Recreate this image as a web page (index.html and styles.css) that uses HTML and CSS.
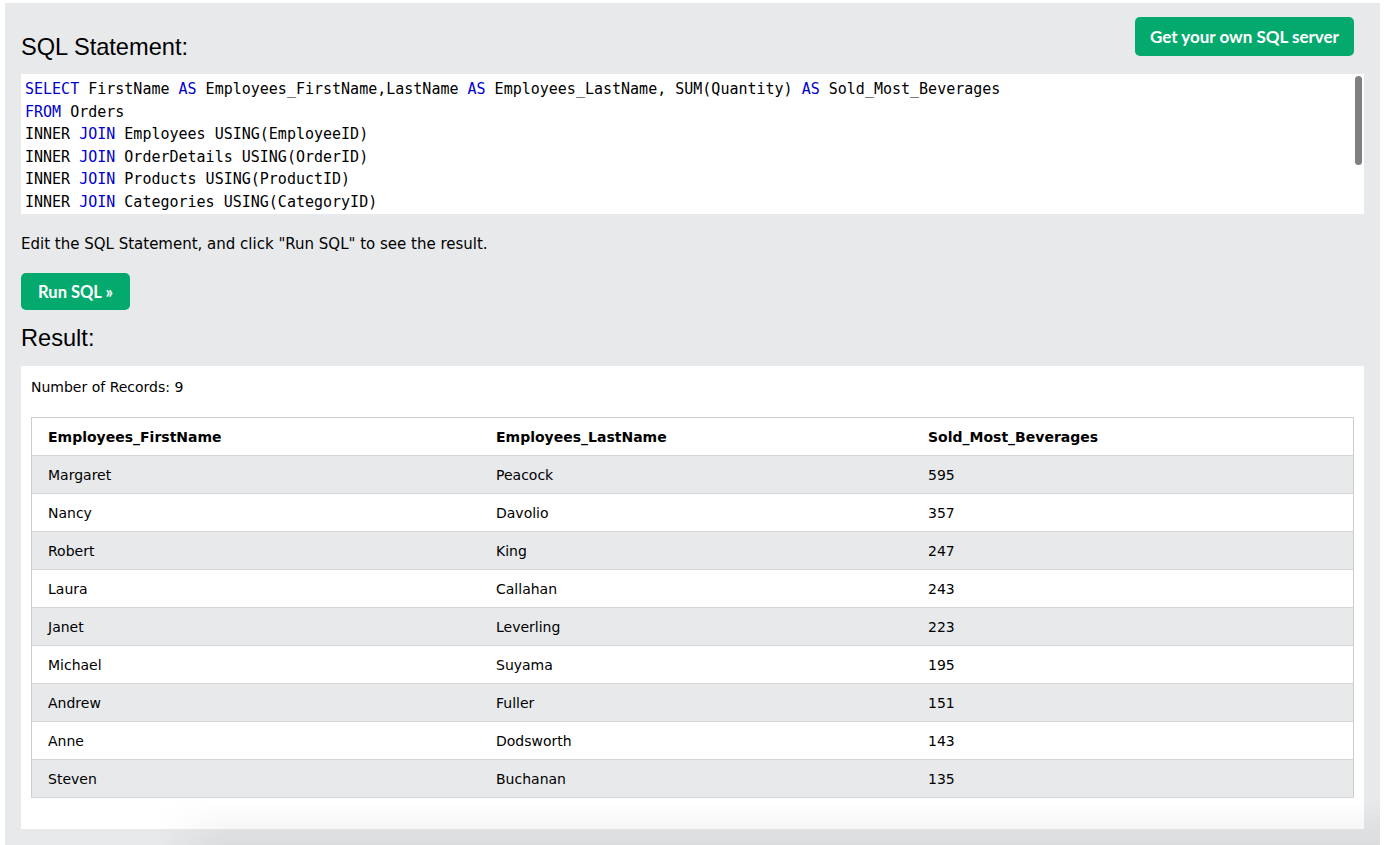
FILE: index.html
```html
<!DOCTYPE html>
<html>
<head>
<meta charset="utf-8">
<title>SQL Tryit</title>
<link rel="stylesheet" href="styles.css">
</head>
<body>
<div class="panel">
  <div class="head-row">
    <h2 class="title title-top">SQL Statement:</h2>
    <a class="btn btn-server">Get your own SQL server</a>
  </div>
  <div class="code">
    <div class="line"><span class="kw">SELECT</span> FirstName <span class="kw">AS</span> Employees_FirstName,LastName <span class="kw">AS</span> Employees_LastName, SUM(Quantity) <span class="kw">AS</span> Sold_Most_Beverages</div>
    <div class="line"><span class="kw">FROM</span> Orders</div>
    <div class="line">INNER <span class="kw">JOIN</span> Employees USING(EmployeeID)</div>
    <div class="line">INNER <span class="kw">JOIN</span> OrderDetails USING(OrderID)</div>
    <div class="line">INNER <span class="kw">JOIN</span> Products USING(ProductID)</div>
    <div class="line">INNER <span class="kw">JOIN</span> Categories USING(CategoryID)</div>
    <div class="scroll-thumb"></div>
  </div>
  <p class="hint">Edit the SQL Statement, and click "Run SQL" to see the result.</p>
  <a class="btn btn-run">Run SQL »</a>
  <h2 class="title title-result">Result:</h2>
  <div class="result">
    <div class="count">Number of Records: 9</div>
    <table class="grid">
      <thead>
        <tr><th class="c1">Employees_FirstName</th><th class="c2">Employees_LastName</th><th class="c3">Sold_Most_Beverages</th></tr>
      </thead>
      <tbody>
        <tr><td>Margaret</td><td>Peacock</td><td>595</td></tr>
        <tr><td>Nancy</td><td>Davolio</td><td>357</td></tr>
        <tr><td>Robert</td><td>King</td><td>247</td></tr>
        <tr><td>Laura</td><td>Callahan</td><td>243</td></tr>
        <tr><td>Janet</td><td>Leverling</td><td>223</td></tr>
        <tr><td>Michael</td><td>Suyama</td><td>195</td></tr>
        <tr><td>Andrew</td><td>Fuller</td><td>151</td></tr>
        <tr><td>Anne</td><td>Dodsworth</td><td>143</td></tr>
        <tr><td>Steven</td><td>Buchanan</td><td>135</td></tr>
      </tbody>
    </table>
  </div>
  <div class="bottom-shade"></div>
</div>
</body>
</html>
```
FILE: styles.css
```css
html, body {
  margin: 0;
  padding: 0;
  background: #ffffff;
  overflow: hidden;
}
body {
  font-family: "DejaVu Sans", Verdana, sans-serif;
  color: #000;
}
.panel {
  position: relative;
  margin: 3px 5px 0 5px;
  background: #e7e9eb;
  padding: 14px 16px 17px 16px;
}
.head-row {
  display: flex;
  justify-content: space-between;
  align-items: flex-start;
}
.title {
  font-family: "Liberation Sans", Arial, sans-serif;
  font-weight: normal;
  font-size: 23.6px;
  line-height: 28px;
  margin: 0;
  color: #000;
}
.title-top {
  margin-top: 16px;
}
.btn {
  display: inline-flex;
  align-items: center;
  justify-content: center;
  background: #04aa6d;
  color: #fff;
  font-family: Lato, "Open Sans", sans-serif;
  font-weight: 700;
  border-radius: 5px;
  text-decoration: none;
  box-sizing: border-box;
}
.btn-server {
  width: 219px;
  height: 39px;
  font-size: 17px;
  margin-right: 10px;
}
.btn-run {
  width: 109px;
  height: 37px;
  font-size: 16.5px;
  margin-top: 18px;
}
.code {
  position: relative;
  margin-top: 13px;
  height: 140px;
  box-sizing: border-box;
  background: #fff;
  padding: 4px 4px;
  overflow: hidden;
  font-family: "DejaVu Sans Mono", Menlo, monospace;
  font-size: 15px;
  line-height: 22.5px;
  color: #000;
}
.line {
  white-space: pre;
}
.kw {
  color: #0000cd;
}
.scroll-thumb {
  position: absolute;
  top: 2px;
  right: 2px;
  width: 7px;
  height: 89px;
  border-radius: 4px;
  background: #808080;
}
.hint {
  margin: 19px 0 0 0;
  font-size: 15px;
  line-height: 22px;
}
.title-result {
  margin-top: 14px;
}
.result {
  margin-top: 14px;
  background: #fff;
  padding: 10px 10px 31px 10px;
}
.count {
  font-size: 14px;
  line-height: 22px;
  margin-bottom: 19px;
}
.grid {
  width: 100%;
  border-collapse: collapse;
  table-layout: fixed;
  border: 1px solid #cccccc;
  font-size: 14px;
}
.grid th,
.grid td {
  text-align: left;
  padding: 9px 16px 7px 16px;
  line-height: 21px;
  border-bottom: 1px solid #d5d5d5;
}
.grid th {
  font-weight: bold;
}
.grid .c1 { width: 416px; }
.grid .c2 { width: 400px; }
.grid .c3 { width: auto; }
.grid tbody tr:nth-child(odd) {
  background: #e7e9eb;
}
.bottom-shade {
  position: absolute;
  left: 40px;
  right: 0;
  bottom: 0;
  height: 46px;
  background: linear-gradient(to bottom, rgba(0, 0, 0, 0), rgba(0, 0, 0, 0.055));
  -webkit-mask-image: linear-gradient(to right, transparent 0, transparent 110px, #000 180px);
  mask-image: linear-gradient(to right, transparent 0, transparent 110px, #000 180px);
  pointer-events: none;
}
```
